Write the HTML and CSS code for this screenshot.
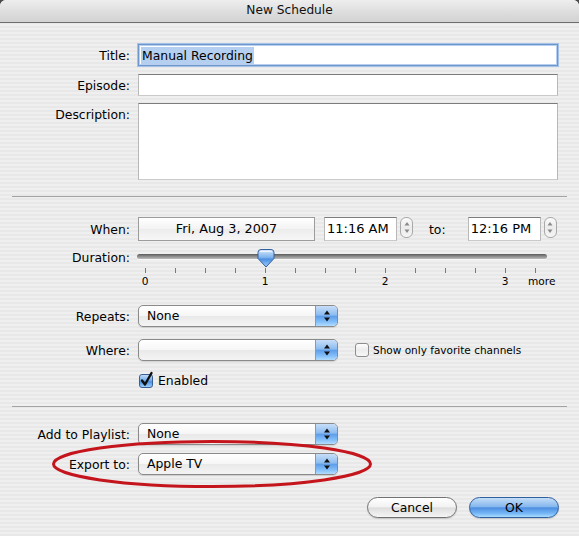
FILE: index.html
```html
<!DOCTYPE html>
<html>
<head>
<meta charset="utf-8">
<title>New Schedule</title>
<link rel="stylesheet" href="styles.css">
</head>
<body>
<div class="window">
  <div class="titlebar">New Schedule</div>
  <div class="content">
    <div class="row r-title">
      <span class="lbl">Title:</span>
      <div class="field focus"><span class="sel">Manual Recording</span></div>
    </div>
    <div class="row r-episode">
      <span class="lbl">Episode:</span>
      <div class="field"></div>
    </div>
    <div class="row r-desc top">
      <span class="lbl lbl-top">Description:</span>
      <div class="field area"></div>
    </div>

    <div class="sep"></div>

    <div class="row r-when">
      <span class="lbl">When:</span>
      <div class="datefield">Fri, Aug 3, 2007</div>
      <div class="time">11:16 AM</div>
      <div class="stepper">
        <svg width="12" height="21" viewBox="0 0 12 21"><path d="M6 5 L8.5 8.5 L3.5 8.5 Z" fill="#8a8a8a"/><path d="M6 16 L8.5 12.5 L3.5 12.5 Z" fill="#8a8a8a"/></svg>
      </div>
      <span class="to">to:</span>
      <div class="time">12:16 PM</div>
      <div class="stepper">
        <svg width="12" height="21" viewBox="0 0 12 21"><path d="M6 5 L8.5 8.5 L3.5 8.5 Z" fill="#8a8a8a"/><path d="M6 16 L8.5 12.5 L3.5 12.5 Z" fill="#8a8a8a"/></svg>
      </div>
    </div>

    <div class="row r-dur top">
      <span class="lbl lbl-dur">Duration:</span>
      <div class="slider">
        <div class="track"></div>
        <svg class="thumb" width="20" height="21" viewBox="0 0 20 21">
          <defs>
            <linearGradient id="tg" x1="0" y1="0" x2="0" y2="1">
              <stop offset="0" stop-color="#d6e8fb"/>
              <stop offset="0.45" stop-color="#7fb3ee"/>
              <stop offset="0.55" stop-color="#4b8fe0"/>
              <stop offset="1" stop-color="#9fd0ff"/>
            </linearGradient>
          </defs>
          <path d="M2 4.5 Q2 1.5 5 1.5 L15 1.5 Q18 1.5 18 4.5 L18 10.5 L10 19 L2 10.5 Z" fill="url(#tg)" stroke="#35609e" stroke-width="1"/>
          <path d="M4 3.5 L16 3.5" stroke="#ffffff" stroke-opacity="0.7" stroke-width="1.2"/>
        </svg>
        <div class="ticks">
          <i></i><i></i><i></i><i></i><i></i><i></i><i></i><i></i><i></i><i></i><i></i><i></i><i></i><i></i>
        </div>
        <div class="ticklabels">
          <span class="c1">0</span><span class="c5">1</span><span class="c9">2</span><span class="c13">3</span><span class="c14">more</span>
        </div>
      </div>
    </div>

    <div class="row r-repeats">
      <span class="lbl">Repeats:</span>
      <div class="popup"><span class="val">None</span><span class="arrows"><svg width="8" height="12" viewBox="0 0 8 12"><path d="M4 0.5 L7 4.5 L1 4.5 Z" fill="#111"/><path d="M4 11.5 L7 7.5 L1 7.5 Z" fill="#111"/></svg></span></div>
    </div>

    <div class="row r-where">
      <span class="lbl">Where:</span>
      <div class="popup"><span class="val"></span><span class="arrows"><svg width="8" height="12" viewBox="0 0 8 12"><path d="M4 0.5 L7 4.5 L1 4.5 Z" fill="#111"/><path d="M4 11.5 L7 7.5 L1 7.5 Z" fill="#111"/></svg></span></div>
      <span class="cb"></span>
      <span class="small">Show only favorite channels</span>
    </div>

    <div class="row r-enabled">
      <svg class="cbchk" width="17" height="17" viewBox="0 0 17 17">
        <defs>
          <linearGradient id="cg" x1="0" y1="0" x2="0" y2="1">
            <stop offset="0" stop-color="#c9e0f8"/>
            <stop offset="0.5" stop-color="#6ea8ea"/>
            <stop offset="0.55" stop-color="#4a8fe0"/>
            <stop offset="1" stop-color="#a6d6ff"/>
          </linearGradient>
        </defs>
        <rect x="1.5" y="3.5" width="13" height="13" rx="2.5" fill="url(#cg)" stroke="#3a5f95"/>
        <path d="M4 9.5 L7 13.5 L13.5 2" fill="none" stroke="#111" stroke-width="2.4" stroke-linecap="round" stroke-linejoin="round"/>
      </svg>
      <span class="enabled">Enabled</span>
    </div>

    <div class="sep sep2"></div>

    <div class="row r-playlist">
      <span class="lbl">Add to Playlist:</span>
      <div class="popup"><span class="val">None</span><span class="arrows"><svg width="8" height="12" viewBox="0 0 8 12"><path d="M4 0.5 L7 4.5 L1 4.5 Z" fill="#111"/><path d="M4 11.5 L7 7.5 L1 7.5 Z" fill="#111"/></svg></span></div>
    </div>

    <div class="row r-export">
      <span class="lbl">Export to:</span>
      <div class="popup"><span class="val">Apple TV</span><span class="arrows"><svg width="8" height="12" viewBox="0 0 8 12"><path d="M4 0.5 L7 4.5 L1 4.5 Z" fill="#111"/><path d="M4 11.5 L7 7.5 L1 7.5 Z" fill="#111"/></svg></span></div>
    </div>

    <div class="buttons">
      <div class="btn">Cancel</div>
      <div class="btn ok">OK</div>
    </div>
  </div>

  <svg class="circle" width="330" height="56" viewBox="0 0 330 56">
    <ellipse cx="162" cy="27" rx="158.5" ry="22.5" fill="none" stroke="#c4151c" stroke-width="3"/>
  </svg>
</div>
</body>
</html>
```

FILE: styles.css
```css
html, body {
  margin: 0;
  padding: 0;
  background: #4a4a4a;
}

.window {
  position: relative;
  width: 579px;
  height: 536px;
  overflow: hidden;
  border-radius: 6px 6px 0 0;
  font-family: "DejaVu Sans", "Liberation Sans", sans-serif;
  font-size: 12.4px;
  color: #000;
  background: repeating-linear-gradient(#efefef 0px, #efefef 2px, #e8e8e8 2px, #e8e8e8 4px);
}

.titlebar {
  height: 22px;
  line-height: 21px;
  text-align: center;
  font-size: 12.2px;
  color: #111;
  background: linear-gradient(#eeeeee, #dcdcdc 60%, #d2d2d2);
  border-bottom: 1px solid #6e6e6e;
}

.content {
  padding: 21px 21px 0 0;
}

.row {
  display: flex;
  align-items: center;
}

.row.top {
  align-items: flex-start;
}

.lbl {
  flex: none;
  width: 130px;
  margin-right: 8px;
  text-align: right;
  line-height: 15px;
}

.lbl-top {
  padding-top: 4px;
}

.lbl-dur {
  padding-top: 2px;
}

.field {
  flex: 1;
  box-sizing: border-box;
  height: 22px;
  background: #fff;
  border: 1px solid;
  border-color: #7c7c7c #b9b9b9 #cacaca #b9b9b9;
  display: flex;
  align-items: center;
  padding-left: 2px;
}

.field.focus {
  border-color: #6d96cc;
  box-shadow: 0 0 0 1px #a4c2e8, inset 0 0 0 1px #b7cfee;
}

.sel {
  background: #b5cff0;
  line-height: 17px;
  padding: 0 1px 0 1px;
}

.field.area {
  height: 77px;
}

.r-episode { margin-top: 8px; }
.r-desc { margin-top: 7px; }

.sep {
  height: 1px;
  margin: 16px 0 0 12px;
  width: 555px;
  background: #a3a3a3;
}

.r-when {
  margin-top: 20px;
  height: 24px;
}

.datefield {
  box-sizing: border-box;
  width: 177px;
  height: 24px;
  line-height: 22px;
  text-align: center;
  font-size: 12.8px;
  border: 1px solid #9c9c9c;
  background: linear-gradient(#ffffff, #f3f3f3 50%, #ececec 51%, #f7f7f7);
  margin-right: 9px;
}

.time {
  box-sizing: border-box;
  width: 73px;
  height: 24px;
  line-height: 22px;
  font-size: 13px;
  padding-left: 2px;
  background: #fff;
  border: 1px solid;
  border-color: #7c7c7c #b9b9b9 #cacaca #b9b9b9;
}

.stepper {
  box-sizing: border-box;
  width: 13px;
  height: 21px;
  margin-left: 3px;
  margin-bottom: 3px;
  border: 1px solid #a9a9a9;
  border-radius: 6px;
  background: linear-gradient(#fafafa, #ececec 50%, #f5f5f5);
  display: flex;
  align-items: center;
  justify-content: center;
  overflow: hidden;
}

.stepper svg {
  display: block;
  flex: none;
}

.to {
  margin-left: 16px;
  margin-right: 22px;
}

.r-dur {
  margin-top: 7px;
}

.slider {
  position: relative;
  width: 410px;
  height: 40px;
  margin-left: -1px;
}

.track {
  margin-top: 6px;
  height: 5px;
  border-radius: 3px;
  background: linear-gradient(#5a5a5a, #8e8e8e 50%, #bcbcbc);
  box-shadow: 0 1px 0 rgba(255,255,255,0.7);
}

.thumb {
  position: absolute;
  left: 119px;
  top: 0px;
}

.ticks {
  display: grid;
  grid-template-columns: repeat(14, 30px);
  margin: 9px 0 0 -7px;
  width: 420px;
  height: 5px;
}

.ticks i {
  justify-self: center;
  width: 1px;
  height: 5px;
  background: #7a7a7a;
}

.ticklabels {
  display: grid;
  grid-template-columns: repeat(14, 30px);
  margin: 2px 0 0 -7px;
  width: 420px;
  line-height: 12px;
  font-size: 10.6px;
}

.ticklabels span { justify-self: center; }
.ticklabels .c1 { grid-column: 1; }
.ticklabels .c5 { grid-column: 5; }
.ticklabels .c9 { grid-column: 9; }
.ticklabels .c13 { grid-column: 13; }
.ticklabels .c14 { grid-column: 14; justify-self: start; margin-left: 8px; }

.r-repeats { margin-top: 17px; }
.r-where { margin-top: 12px; }

.popup {
  box-sizing: border-box;
  width: 200px;
  height: 22px;
  flex: none;
  border: 1px solid #8a8a8a;
  border-radius: 5px;
  display: flex;
  align-items: center;
  overflow: hidden;
  background: linear-gradient(#ffffff, #f6f6f6 48%, #e9e9e9 52%, #f4f4f4 100%);
  box-shadow: 0 1px 1px rgba(0,0,0,0.12);
}

.popup .val {
  flex: 1;
  padding-left: 8px;
  line-height: 20px;
}

.popup .arrows {
  flex: none;
  width: 21px;
  align-self: stretch;
  display: flex;
  align-items: center;
  justify-content: center;
  border-left: 1px solid #7c9bc8;
  background: linear-gradient(#c8def8, #8dbcf0 45%, #5f9ee9 52%, #84c0fa 80%, #b3dcff);
}

.popup .arrows svg { display: block; }

.cb {
  flex: none;
  box-sizing: border-box;
  width: 14px;
  height: 14px;
  margin-left: 17px;
  border: 1px solid #8d8d8d;
  border-radius: 3px;
  background: linear-gradient(#fdfdfd, #ececec 50%, #f7f7f7);
}

.small {
  font-size: 10.5px;
  margin-left: 4px;
}

.r-enabled {
  margin-top: 10px;
  height: 17px;
}

.cbchk {
  margin-left: 138px;
  flex: none;
  display: block;
}

.enabled {
  margin-left: 3px;
  padding-top: 2px;
}

.sep2 { margin-top: 18px; }

.r-playlist { margin-top: 16px; }
.r-export { margin-top: 8px; }

.buttons {
  display: flex;
  justify-content: flex-end;
  gap: 12px;
  margin-top: 22px;
  padding-right: 0;
  margin-right: -1px;
}

.btn {
  box-sizing: border-box;
  width: 90px;
  height: 21px;
  line-height: 19px;
  text-align: center;
  border: 1px solid #727272;
  border-radius: 11px;
  background: linear-gradient(#ffffff, #f3f3f3 45%, #dedede 52%, #f5f5f5 100%);
  box-shadow: 0 1px 1px rgba(0,0,0,0.15);
}

.btn.ok {
  border-color: #2f5f9f;
  background: linear-gradient(#c5ddf7, #86b8ef 45%, #4d8fe0 52%, #74b5f6 80%, #a9dcff);
}

.circle {
  position: absolute;
  left: 50px;
  top: 437px;
}
```
